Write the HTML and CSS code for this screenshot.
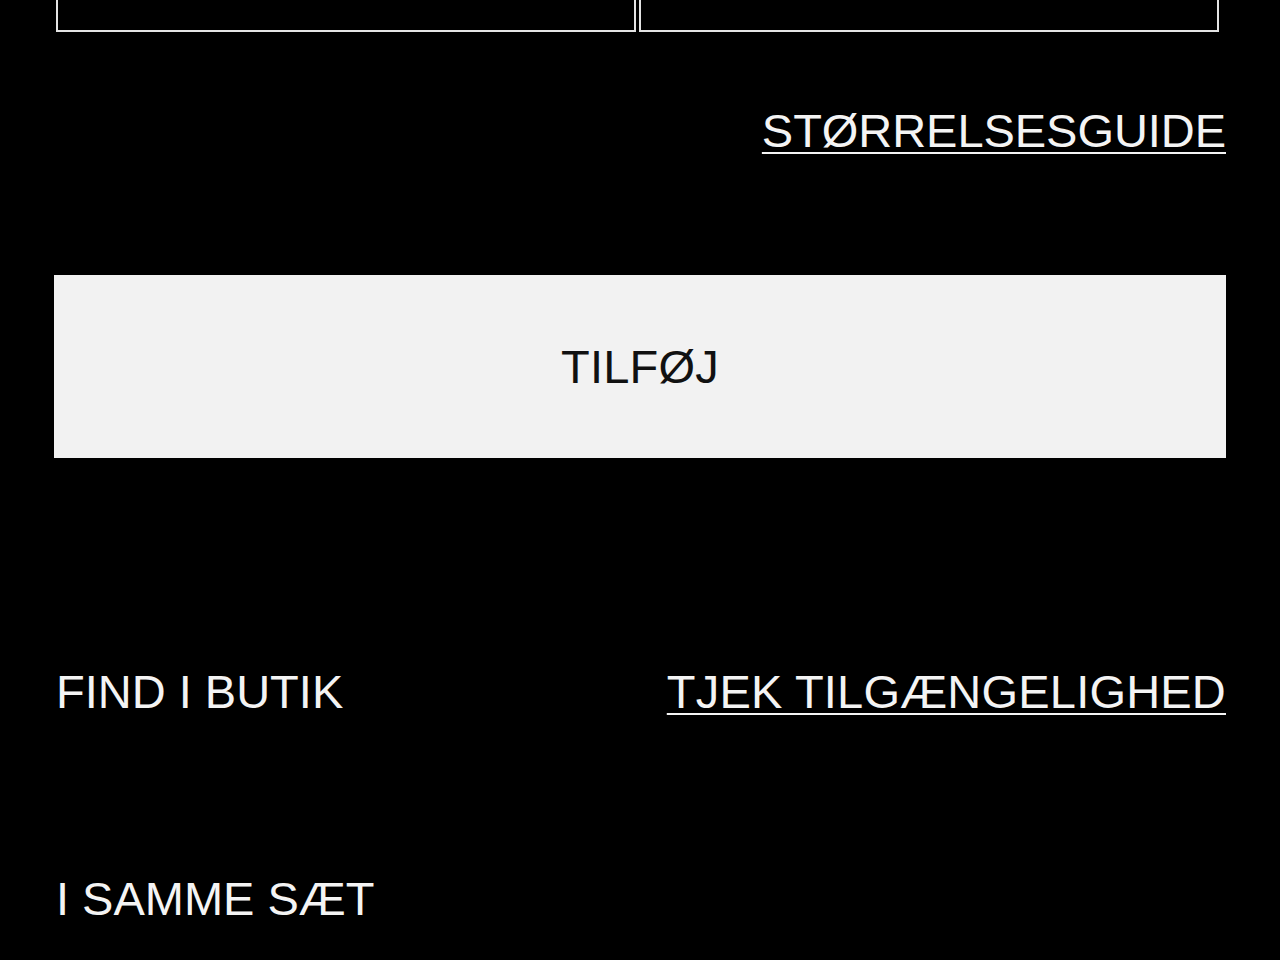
FILE: index.html
```html
<!DOCTYPE html>
<html lang="da">
<head>
<meta charset="utf-8">
<title>Produkt</title>
<link rel="stylesheet" href="styles.css">
</head>
<body>
<main class="page">
  <div class="sizes">
    <div class="size-box"></div>
    <div class="size-box"></div>
  </div>
  <div class="guide-row">
    <a class="link" href="#">STØRRELSESGUIDE</a>
  </div>
  <button class="add-btn" type="button">TILFØJ</button>
  <div class="store-row">
    <span class="label">FIND I BUTIK</span>
    <a class="link link-wide" href="#">TJEK TILGÆNGELIGHED</a>
  </div>
  <h2 class="set-title">I SAMME SÆT</h2>
</main>
</body>
</html>
```

FILE: styles.css
```css
html, body {
  margin: 0;
  padding: 0;
  background: #000;
}

body {
  font-family: "Liberation Sans", Arial, Helvetica, sans-serif;
  color: #f4f4f4;
  overflow: hidden;
}

.page {
  padding: 0 54px;
  height: 960px;
  box-sizing: border-box;
}

.sizes {
  display: grid;
  grid-template-columns: 1fr 1fr;
  gap: 3px;
  margin: -40px 7px 0 2px;
}

.size-box {
  height: 72px;
  border: 2px solid #e4e4e4;
  box-sizing: border-box;
}

.guide-row {
  display: flex;
  justify-content: flex-end;
  margin-top: 72px;
  font-size: 47px;
  line-height: 54px;
  letter-spacing: -0.05px;
}

.link {
  color: #f4f4f4;
  text-decoration: underline;
  text-decoration-thickness: 2px;
  text-underline-offset: 5px;
}

.link-wide {
  letter-spacing: 0.2px;
}

.add-btn {
  display: flex;
  align-items: center;
  justify-content: center;
  width: 100%;
  height: 183px;
  margin-top: 117px;
  border: 0;
  padding: 0;
  background: #f2f2f2;
  color: #111;
  font-family: inherit;
  font-size: 47px;
  letter-spacing: 0.2px;
  cursor: pointer;
}

.store-row {
  display: flex;
  justify-content: space-between;
  margin-top: 207px;
  font-size: 47px;
  line-height: 54px;
  letter-spacing: 0;
}

.label {
  padding-left: 2px;
}

.set-title {
  margin: 153px 0 0;
  padding-left: 2px;
  font-weight: normal;
  font-size: 47px;
  line-height: 54px;
  letter-spacing: 0;
}
```
